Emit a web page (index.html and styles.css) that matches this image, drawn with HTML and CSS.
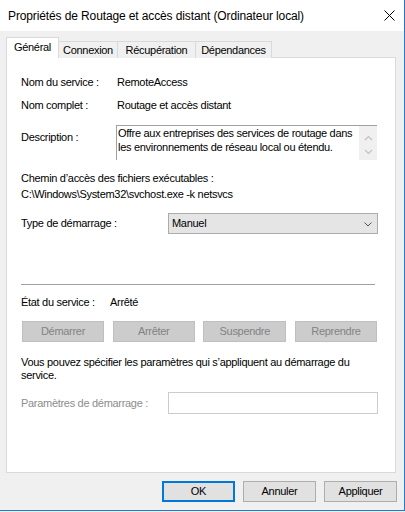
FILE: index.html
```html
<!DOCTYPE html>
<html lang="fr">
<head>
<meta charset="utf-8">
<title>Propriétés de Routage et accès distant</title>
<link rel="stylesheet" href="styles.css">
</head>
<body>
<div class="window">
  <div class="titlebar">
    <span class="title">Propriétés de Routage et accès distant (Ordinateur local)</span>
    <svg class="close" width="11" height="11" viewBox="0 0 11 11"><path d="M0.5 0.5 L10.5 10.5 M10.5 0.5 L0.5 10.5" stroke="#000" stroke-width="1" fill="none"/></svg>
  </div>
  <div class="body">
    <div class="tabs">
      <div class="tab active">Général</div>
      <div class="tab t-conn">Connexion</div>
      <div class="tab t-recup">Récupération</div>
      <div class="tab t-dep">Dépendances</div>
    </div>
    <div class="panel">
      <div class="row r-name"><span class="lbl">Nom du service :</span><span class="val">RemoteAccess</span></div>
      <div class="row r-full"><span class="lbl">Nom complet :</span><span class="val">Routage et accès distant</span></div>
      <div class="row r-desc">
        <span class="lbl">Description :</span>
        <div class="descbox">
          <div class="desctext">Offre aux entreprises des services de routage dans les environnements de réseau local ou étendu.</div>
          <div class="vscroll">
            <svg width="9" height="6" viewBox="0 0 9 6"><path d="M1 5 L4.5 1.5 L8 5" stroke="#c2c2c2" stroke-width="1.2" fill="none"/></svg>
            <svg width="9" height="6" viewBox="0 0 9 6"><path d="M1 1 L4.5 4.5 L8 1" stroke="#c2c2c2" stroke-width="1.2" fill="none"/></svg>
          </div>
        </div>
      </div>
      <div class="r-path1">Chemin d’accès des fichiers exécutables :</div>
      <div class="r-path2">C:\Windows\System32\svchost.exe -k netsvcs</div>
      <div class="row r-start">
        <span class="lbl wide">Type de démarrage :</span>
        <div class="combo"><span>Manuel</span>
          <svg width="8" height="5" viewBox="0 0 8 5"><path d="M0.5 0.5 L4 4 L7.5 0.5" stroke="#505050" stroke-width="1" fill="none"/></svg>
        </div>
      </div>
      <div class="sep"></div>
      <div class="row r-state"><span class="lbl state">État du service :</span><span>Arrêté</span></div>
      <div class="svcbtns">
        <div class="dbtn">Démarrer</div>
        <div class="dbtn">Arrêter</div>
        <div class="dbtn">Suspendre</div>
        <div class="dbtn">Reprendre</div>
      </div>
      <div class="hint">Vous pouvez spécifier les paramètres qui s’appliquent au démarrage du service.</div>
      <div class="row r-params">
        <span class="lbl wide disabled">Paramètres de démarrage :</span>
        <div class="pinput"></div>
      </div>
    </div>
    <div class="actions">
      <div class="btn default">OK</div>
      <div class="btn">Annuler</div>
      <div class="btn">Appliquer</div>
    </div>
  </div>
</div>
</body>
</html>
```

FILE: styles.css
```css
* { box-sizing: border-box; }
html, body { margin: 0; padding: 0; }
body {
  background: #f0f0f0;
  font-family: "Liberation Sans", Arial, sans-serif;
  font-size: 11px;
  line-height: 13px;
  letter-spacing: -0.3px;
  color: #000;
}
.window {
  width: 405px;
  height: 511px;
  border-right: 1px solid #1a7dd3;
  border-bottom: 1px solid #1a7dd3;
  background: #f0f0f0;
  display: flex;
  flex-direction: column;
}
.titlebar {
  height: 31px;
  background: #fff;
  display: flex;
  align-items: center;
  justify-content: space-between;
  padding: 0 9px 0 8px;
}
.title {
  font-size: 12px;
  line-height: 16px;
  letter-spacing: -0.12px;
  padding-top: 1px;
}
.close { display: block; }
.body {
  flex: 1;
  padding: 6px 7px 8px 6px;
}
.tabs {
  display: flex;
  align-items: flex-end;
  height: 21px;
}
.tab {
  height: 17px;
  border: 1px solid #d9d9d9;
  border-bottom: none;
  background: #f0f0f0;
  text-align: center;
  padding-top: 2px;
  margin-left: -1px;
}
.tab.active {
  height: 21px;
  width: 53px;
  margin-left: 0;
  background: #fff;
  padding-top: 3px;
  position: relative;
  z-index: 1;
}
.t-conn { width: 60px; }
.t-recup { width: 79px; }
.t-dep { width: 77px; }
.panel {
  margin-top: -1px;
  width: 390px;
  height: 416px;
  border: 1px solid #d9d9d9;
  background: #fff;
  padding: 18px 0 0 14px;
}
.row { display: flex; }
.lbl { width: 96px; flex: none; }
.lbl.wide { width: 147px; }
.lbl.state { width: 89px; }
.disabled { color: #8d8d8d; }
.r-full { margin-top: 10px; }
.r-desc { margin-top: 13px; }
.r-desc .lbl { width: 95px; padding-top: 6px; }
.descbox {
  width: 261px;
  height: 35px;
  border-top: 1px solid #a0a0a0;
  border-left: 1px solid #a0a0a0;
  display: flex;
}
.desctext {
  flex: 1;
  padding: 0 0 0 1px;
  line-height: 14px;
}
.vscroll {
  width: 18px;
  flex: none;
  background: #f0f0f0;
  display: flex;
  flex-direction: column;
  align-items: center;
  padding-top: 9px;
  gap: 8px;
}
.vscroll svg { display: block; }
.r-path1 { margin-top: 12px; }
.r-path2 { margin-top: 3px; }
.r-start { margin-top: 12px; align-items: center; }
.combo {
  width: 210px;
  height: 21px;
  border: 1px solid #acacac;
  background: #e5e5e5;
  display: flex;
  align-items: center;
  justify-content: space-between;
  padding: 0 5px 0 3px;
}
.combo svg { display: block; margin-top: 1px; }
.sep {
  margin-top: 50px;
  width: 354px;
  height: 1px;
  background: #a0a0a0;
}
.r-state { margin-top: 11px; }
.svcbtns {
  margin-top: 12px;
  margin-left: 1px;
  display: grid;
  grid-template-columns: 82px 82px 83px 82px;
  width: 355px;
  justify-content: space-between;
}
.dbtn {
  height: 21px;
  background: #cccccc;
  border: 1px solid #bfbfbf;
  color: #838383;
  text-align: center;
  line-height: 19px;
}
.hint {
  margin-top: 14px;
  width: 356px;
}
.r-params { margin-top: 10px; align-items: center; }
.pinput {
  width: 210px;
  height: 22px;
  border: 1px solid #cccccc;
  background: #fff;
}
.actions {
  margin-top: 8px;
  display: flex;
  justify-content: flex-end;
  gap: 8px;
}
.btn {
  width: 73px;
  height: 21px;
  background: #e1e1e1;
  border: 1px solid #adadad;
  text-align: center;
  line-height: 19px;
}
.btn.default {
  border: 2px solid #0078d7;
  line-height: 17px;
}
```
